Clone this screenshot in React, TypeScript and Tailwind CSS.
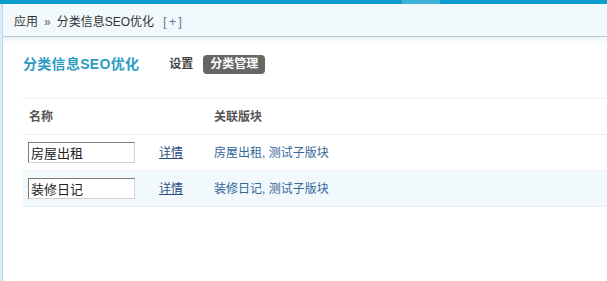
export default function App() {
  const rows = [
    { name: "房屋出租", forums: "房屋出租, 测试子版块", alt: false },
    { name: "装修日记", forums: "装修日记, 测试子版块", alt: true },
  ];

  return (
    <div
      className="w-full h-[281px] overflow-hidden bg-white text-[12px] text-[#333]"
      style={{ fontFamily: '"Liberation Sans", "Noto Sans CJK SC", sans-serif' }}
    >
      {/* top bar */}
      <div className="flex h-[4px]">
        <div className="w-[402px] bg-[#0b9bcd]" />
        <div className="w-[38px] bg-[#3fb2dc]" />
        <div className="flex-1 bg-[#0b9bcd]" />
      </div>

      <div className="flex h-[277px]">
        <div className="w-[3px] bg-[#d6edf6] border-r border-[#bcdbe9]" />

        <div className="flex-1 flex flex-col">
          {/* breadcrumb */}
          <div className="h-[33px] bg-[#f2f9fd] border-b border-[#b8c7ce] flex items-center pl-[11px] pt-[4px]">
            <span>应用</span>
            <span className="mx-[6px] text-[#666]">»</span>
            <span>分类信息SEO优化</span>
            <span className="ml-[9px] text-[13px] tracking-[2px] text-[#5b7fa6]">[+]</span>
          </div>
          <div className="h-[8px] bg-gradient-to-b from-[#eaf4fa] to-white" />

          <div className="pl-[20px]">
            {/* title row */}
            <div className="mt-[9px] h-[20px] flex items-center">
              <h1 className="text-[14px] font-bold text-[#2c9cc2] leading-none tracking-[0.3px]">分类信息SEO优化</h1>
              <span className="ml-[30px] font-bold text-[#444]">设置</span>
              <span className="ml-[10px] h-[19px] px-[7px] flex items-center rounded-[4px] bg-[#666] text-white font-bold">
                分类管理
              </span>
            </div>

            {/* table */}
            <div className="mt-[24px] border-t border-[#f0f0f0]">
              <div className="grid grid-cols-[130px_55px_1fr] h-[36px] items-center border-b border-[#ececec] font-bold text-[#555]">
                <div className="pl-[6px]">名称</div>
                <div />
                <div className="pl-[6px]">关联版块</div>
              </div>
              {rows.map((r) => (
                <div
                  key={r.name}
                  className={`grid grid-cols-[130px_55px_1fr] h-[36px] items-center border-b border-[#eef2f4] ${
                    r.alt ? "bg-[#f2f9fd]" : "bg-white"
                  }`}
                >
                  <div className="pl-[5px]">
                    <input
                      defaultValue={r.name}
                      className="w-[107px] h-[21px] px-[2px] text-[13px] text-[#222] bg-white border border-t-[#7a7a7a] border-l-[#7a7a7a] border-r-[#d0d0d0] border-b-[#d0d0d0] outline-none"
                    />
                  </div>
                  <div className="pl-[6px]">
                    <a href="#" className="underline text-[#2b4e7e]">
                      详情
                    </a>
                  </div>
                  <div className="pl-[6px] text-[#336699]">{r.forums}</div>
                </div>
              ))}
            </div>
          </div>
        </div>
      </div>
    </div>
  );
}
